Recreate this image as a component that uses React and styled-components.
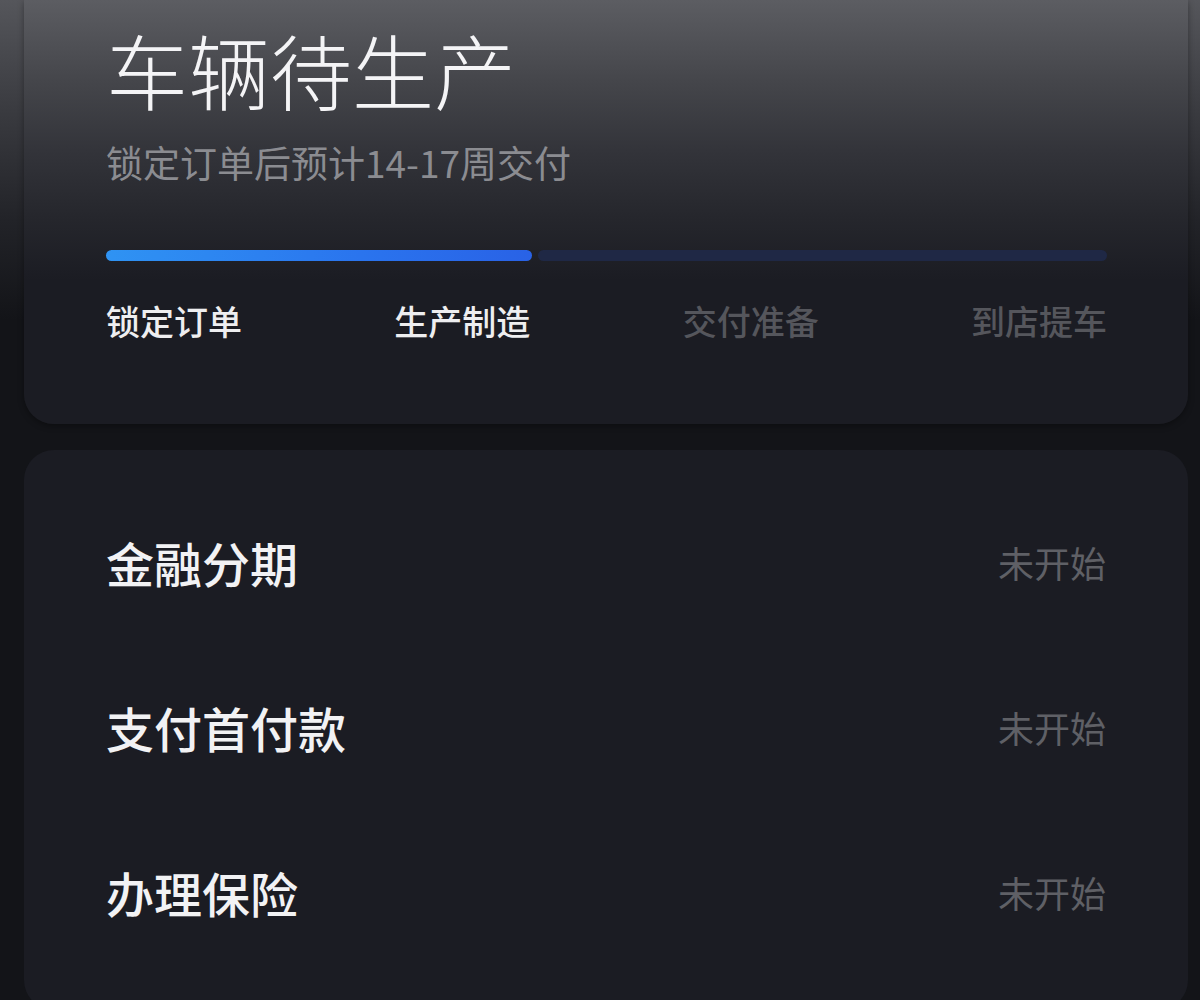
import styled, {createGlobalStyle} from "styled-components";

const GlobalStyle = createGlobalStyle`
  html, body {
    margin: 0;
    padding: 0;
    background: #131418;
  }
  body {
    font-family: "Noto Sans CJK SC", "Noto Sans", sans-serif;
  }
`

const Page = styled.div`
  width: 1200px;
  height: 1000px;
  overflow: hidden;
  box-sizing: border-box;
  padding: 0 12px 0 24px;
  display: flex;
  flex-direction: column;
  gap: 26px;
  background: linear-gradient(180deg, #55565b 0px, #3a3b40 110px, #222328 220px, #131418 320px);
`

const StatusCard = styled.section`
  flex: 0 0 424px;
  box-sizing: border-box;
  border-radius: 0 0 30px 30px;
  padding: 20px 81px 0 82px;
  background: linear-gradient(180deg, #5c5d62 0px, #45464b 80px, #33343a 150px, #26272d 215px, #1b1c23 280px);
  box-shadow: 0 2px 6px rgba(0, 0, 0, 0.35);
`

const Title = styled.h1`
  margin: 0;
  font-size: 82px;
  line-height: 98px;
  font-weight: 300;
  color: #f4f4f6;
`

const Subtitle = styled.p`
  margin: 20px 0 0 0;
  font-size: 37px;
  line-height: 48px;
  color: #8b8c91;
  font-weight: 400;
`

const Track = styled.div`
  margin-top: 64px;
  display: flex;
  gap: 6px;
  height: 11px;
`

const Segment = styled.div`
  flex: ${props => props.grow ? "1 1 auto" : "0 0 426px"};
  border-radius: 6px;
  background: ${props => props.done
    ? "linear-gradient(90deg, #2f93f3 0%, #2a74ee 60%, #2962e6 100%)"
    : "#1f2845"};
`

const Steps = styled.div`
  margin-top: 38px;
  display: flex;
  justify-content: space-between;
`

const Step = styled.span`
  font-size: 34px;
  line-height: 44px;
  font-weight: 500;
  color: ${props => props.active ? "#eeeef0" : "#55565c"};
`

const TaskCard = styled.section`
  flex: 0 0 560px;
  box-sizing: border-box;
  border-radius: 30px;
  padding: 29px 82px 0 82px;
  background: #1b1c23;
  display: flex;
  flex-direction: column;
`

const Row = styled.div`
  height: 165px;
  display: flex;
  align-items: center;
  justify-content: space-between;
`

const Label = styled.span`
  font-size: 48px;
  font-weight: 500;
  color: #f2f2f4;
`

const Status = styled.span`
  font-size: 36px;
  color: #5f6066;
`

const steps = [
    {name: "锁定订单", active: true},
    {name: "生产制造", active: true},
    {name: "交付准备", active: false},
    {name: "到店提车", active: false},
]

const tasks = ["金融分期", "支付首付款", "办理保险"]

const App = () => {
    return (
        <>
            <GlobalStyle/>
            <Page>
                <StatusCard>
                    <Title>车辆待生产</Title>
                    <Subtitle>锁定订单后预计14-17周交付</Subtitle>
                    <Track>
                        <Segment done/>
                        <Segment grow/>
                    </Track>
                    <Steps>
                        {steps.map(s => <Step key={s.name} active={s.active}>{s.name}</Step>)}
                    </Steps>
                </StatusCard>
                <TaskCard>
                    {tasks.map(t => (
                        <Row key={t}>
                            <Label>{t}</Label>
                            <Status>未开始</Status>
                        </Row>
                    ))}
                </TaskCard>
            </Page>
        </>
    )
}

export default App
